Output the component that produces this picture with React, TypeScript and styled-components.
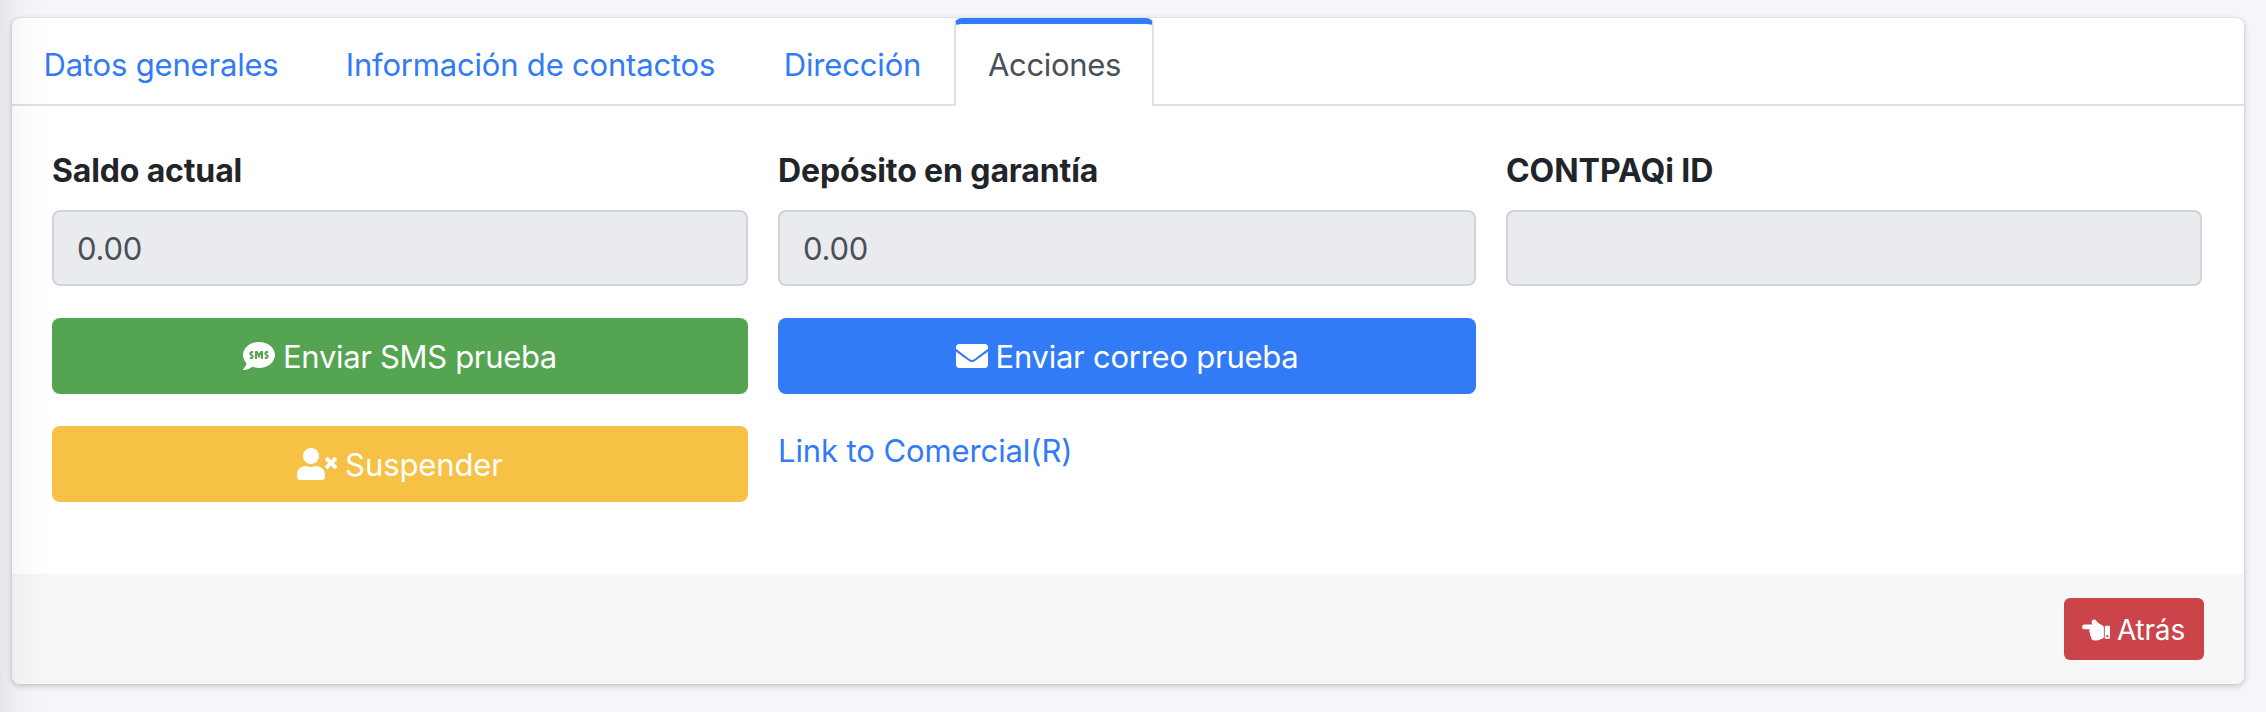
import React from "react";
import styled, { createGlobalStyle, css } from "styled-components";
import { FaEnvelope, FaHandPointLeft, FaSms, FaUserTimes } from "react-icons/fa";

const Global = createGlobalStyle`
  *, *::before, *::after { box-sizing: border-box; }
  body {
    margin: 0;
    background: #f4f6fa;
    color: #212529;
    font-family: Inter, "Liberation Sans", sans-serif;
    font-size: 31px;
    line-height: 48px;
  }
`;

const Page = styled.main`
  height: 712px;
  padding: 18px 22px 28px 12px;
  position: relative;
`;

const EdgeShade = styled.div`
  position: absolute;
  inset: 0 auto 0 0;
  width: 52px;
  pointer-events: none;
  background: linear-gradient(
    to right,
    rgba(0, 0, 0, 0.068),
    rgba(0, 0, 0, 0.032) 25%,
    rgba(0, 0, 0, 0.014) 50%,
    rgba(0, 0, 0, 0.005) 75%,
    transparent
  );
`;

const Card = styled.section`
  height: 666px;
  display: flex;
  flex-direction: column;
  background: #fff;
  border-radius: 8px;
  box-shadow: 0 0 2px rgba(0, 0, 0, 0.125), 0 2px 6px rgba(0, 0, 0, 0.2);
`;

const Tabs = styled.nav`
  display: flex;
  height: 88px;
  flex: none;
  border-bottom: 2px solid #dee2e6;
`;

const Tab = styled.a<{ $active?: boolean; $width: number }>`
  height: 88px;
  width: ${(p) => p.$width}px;
  padding-top: 17px;
  color: #317bf6;
  text-align: center;
  white-space: nowrap;
  border: 2px solid transparent;
  border-top: 6px solid transparent;
  border-bottom: 0;
  ${(p) =>
    p.$active &&
    css`
      padding-left: 1px;
      color: #495057;
      background: #fff;
      border-color: #317bf6 #dee2e6 #fff;
      border-radius: 8px 8px 0 0;
    `}
`;

const Text = styled.span<{ $track?: number }>`
  letter-spacing: ${(p) => p.$track ?? 0}px;
`;

const Body = styled.div`
  flex: 1;
  padding: 41px 42px 0 40px;
  display: grid;
  grid-template-columns: 696px 698px 696px;
  column-gap: 30px;
  row-gap: 32px;
  align-content: start;
`;

const Field = styled.label`
  display: flex;
  flex-direction: column;
  gap: 15px;
  font-size: 32px;
  font-weight: 700;
`;

const Value = styled.output`
  height: 76px;
  padding: 13px 23px;
  border: 2px solid #ced4d8;
  border-radius: 8px;
  background: #e9ebef;
  color: #495057;
  font-size: 31px;
  font-weight: 400;
`;

const Button = styled.button<{ $bg: string; $small?: boolean }>`
  display: flex;
  align-items: center;
  justify-content: center;
  gap: ${(p) => (p.$small ? 7 : 8)}px;
  height: ${(p) => (p.$small ? 62 : 76)}px;
  width: ${(p) => (p.$small ? "140px" : "100%")};
  padding: ${(p) => (p.$small ? "2px 1px 0 0" : "1px 0 0")};
  border: 0;
  border-radius: ${(p) => (p.$small ? 6 : 8)}px;
  background: ${(p) => p.$bg};
  color: #fff;
  font: inherit;
  font-size: ${(p) => (p.$small ? 28 : 31)}px;
  white-space: nowrap;
`;

const Glyph = styled.span<{ $width: number; $height: number }>`
  display: flex;
  flex: none;
  margin-top: -1px;
  svg {
    width: ${(p) => p.$width}px;
    height: ${(p) => p.$height}px;
  }
`;

const Link = styled.a`
  padding-top: 1px;
  color: #317bf6;
`;

const Actions = styled.div`
  grid-column: 1 / -1;
  display: grid;
  grid-template-columns: subgrid;
`;

const Footer = styled.footer`
  height: 110px;
  padding: 24px 40px;
  display: flex;
  justify-content: flex-end;
  background: #f7f7f7;
  border-radius: 0 0 8px 8px;
`;

export default function App() {
  return (
    <>
      <Global />
      <Page>
        <Card>
          <Tabs>
            <Tab $width={298}><Text $track={-0.18}>Datos generales</Text></Tab>
            <Tab $width={441}><Text $track={-0.19}>Información de contactos</Text></Tab>
            <Tab $width={203}><Text $track={-0.16}>Dirección</Text></Tab>
            <Tab $active $width={200}><Text $track={-0.35}>Acciones</Text></Tab>
          </Tabs>
          <Body>
            <Field><Text $track={-0.15}>Saldo actual</Text><Value><Text $track={-0.2}>0.00</Text></Value></Field>
            <Field><Text $track={-0.12}>Depósito en garantía</Text><Value><Text $track={-0.2}>0.00</Text></Value></Field>
            <Field><Text $track={-0.05}>CONTPAQi ID</Text><Value /></Field>
            <Actions>
              <Button $bg="#54a451">
                <Glyph $width={32} $height={32}><FaSms /></Glyph>
                <Text $track={-0.33}>Enviar SMS prueba</Text>
              </Button>
              <Button $bg="#317bf6">
                <Glyph $width={32} $height={32}><FaEnvelope /></Glyph>
                <Text $track={-0.25}>Enviar correo prueba</Text>
              </Button>
            </Actions>
            <Actions>
              <Button $bg="#f6c144">
                <Glyph $width={40} $height={32}><FaUserTimes /></Glyph>
                <Text $track={-0.1}>Suspender</Text>
              </Button>
              <Link><Text $track={-0.1}>Link to Comercial(R)</Text></Link>
            </Actions>
          </Body>
          <Footer>
            <Button $small $bg="#ca444a">
              <Glyph $width={28} $height={28}><FaHandPointLeft /></Glyph>
              <Text $track={-0.2}>Atrás</Text>
            </Button>
          </Footer>
        </Card>
        <EdgeShade />
      </Page>
    </>
  );
}
